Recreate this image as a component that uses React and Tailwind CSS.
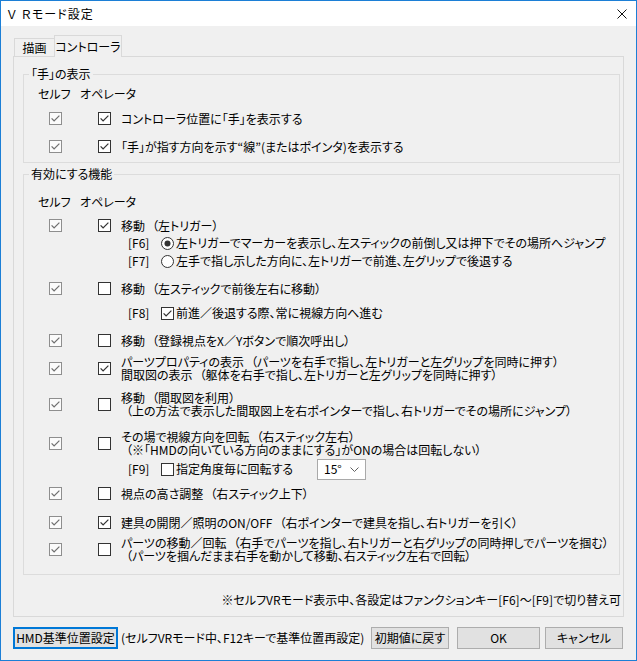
import React from "react";

const Check = ({ checked, dim }) => (
  <svg width="13" height="13" viewBox="0 0 13 13" className="block shrink-0">
    <rect x="0.5" y="0.5" width="12" height="12" fill={dim ? "#fbfbfb" : "#ffffff"} stroke={dim ? "#8e8e8e" : "#333333"} />
    {checked && (
      <path d="M2.6 6.4L5.1 8.9L10.4 3.6" fill="none" stroke={dim ? "#6f6f6f" : "#333333"} strokeWidth="1.25" />
    )}
  </svg>
);

const Radio = ({ checked }) => (
  <svg width="13" height="13" viewBox="0 0 13 13" className="block shrink-0">
    <circle cx="6.5" cy="6.5" r="6" fill="#ffffff" stroke="#333333" />
    {checked && <circle cx="6.5" cy="6.5" r="3" fill="#333333" />}
  </svg>
);

const G = () => <span className="inline-block w-[7px]" />;

const Item = ({ op, className = "", children }) => (
  <div className={`flex items-center pl-[25px] ${className}`}>
    <Check checked dim />
    <div className="ml-[36px]">
      <Check checked={op} />
    </div>
    <div className="ml-[10px] leading-[13px] whitespace-nowrap">{children}</div>
  </div>
);

const Sub = ({ label, control, className = "", children }) => (
  <div className={`flex items-center pl-[104px] whitespace-nowrap ${className}`}>
    <span className="w-[33px] shrink-0">{label}</span>
    {control}
    <span className="ml-[2px]">{children}</span>
  </div>
);

const Header = ({ className = "" }) => (
  <div className={`flex items-center ${className}`}>
    <span className="pl-[14px] w-[56px] shrink-0">セルフ</span>
    <span>オペレータ</span>
  </div>
);

export default function App() {
  return (
    <div className="w-[637px] h-[661px] border border-[#1c7fd6] bg-[#f0f0f0] flex flex-col overflow-hidden text-[12px] text-black font-['Noto_Sans_CJK_JP','Noto_Sans_CJK_SC',sans-serif] [font-feature-settings:'palt']">
      {/* title bar */}
      <div className="h-[25px] shrink-0 bg-white flex items-center pl-[6px] pr-[9px]">
        <span className="tracking-[1px]">Ｖ Ｒモード設定</span>
        <svg width="10" height="10" viewBox="0 0 10 10" className="ml-auto block">
          <path d="M0.5 0.5L9.5 9.5M9.5 0.5L0.5 9.5" stroke="#111" strokeWidth="1" />
        </svg>
      </div>

      <div className="px-[12px] pt-[9px]">
        {/* tabs */}
        <div className="flex items-end h-[21px] pl-[1px]">
          <div className="h-[18px] w-[40px] border border-b-0 border-r-0 border-[#d9d9d9] bg-[#f0f0f0] flex items-center justify-center pt-[1px]">
            描画
          </div>
          <div className="relative z-10 h-[22px] -mb-[1px] w-[68px] border border-b-0 border-[#d9d9d9] bg-[#f0f0f0] flex items-start justify-center pt-[2px]">
            コントローラ
          </div>
        </div>

        {/* panel */}
        <div className="border border-[#d9d9d9] pb-[8px]">
          <fieldset className="mt-[9px] ml-[9px] mr-[3px] border border-[#dcdcdc]">
            <legend className="ml-[5px] px-[2px] leading-[16px]">「手」の表示</legend>
            <Header className="h-[24px]" />
            <Item op className="h-[24px]">コントローラ位置に「手」を表示する</Item>
            <Item op className="h-[32px]">「手」が指す方向を示す“線”(またはポインタ)を表示する</Item>
          </fieldset>

          <fieldset className="mt-[3px] ml-[9px] mr-[3px] border border-[#dcdcdc] pb-[12px]">
            <legend className="ml-[5px] px-[2px] leading-[16px]">有効にする機能</legend>
            <Header className="mt-[10px] h-[20px]" />
            <Item op className="mt-[4px] h-[18px]">
              移動<G />（左トリガー）
            </Item>
            <Sub label="[F6]" control={<Radio checked />} className="h-[18px]">
              左トリガーでマーカーを表示し、左スティックの前倒し又は押下でその場所へジャンプ
            </Sub>
            <Sub label="[F7]" control={<Radio />} className="h-[18px]">
              左手で指し示した方向に、左トリガーで前進、左グリップで後退する
            </Sub>
            <Item className="mt-[9px] h-[18px]">
              移動<G />（左スティックで前後左右に移動）
            </Item>
            <Sub label="[F8]" control={<Check checked />} className="mt-[7px] h-[18px]">
              前進／後退する際、常に視線方向へ進む
            </Sub>
            <Item className="mt-[9px] h-[18px]">
              移動<G />（登録視点をX／Yボタンで順次呼出し）
            </Item>
            <Item op className="mt-[6px] h-[26px]">
              <div>
                パーツプロパティの表示<G />（パーツを右手で指し、左トリガーと左グリップを同時に押す）
              </div>
              <div>
                間取図の表示<G />（躯体を右手で指し、左トリガーと左グリップを同時に押す）
              </div>
            </Item>
            <Item className="mt-[10px] h-[26px]">
              <div>
                移動<G />（間取図を利用）
              </div>
              <div className="pl-[5px]">（上の方法で表示した間取図上を右ポインターで指し、右トリガーでその場所にジャンプ）</div>
            </Item>
            <Item className="mt-[13px] h-[26px]">
              <div>
                その場で視線方向を回転<G />（右スティック左右）
              </div>
              <div className="pl-[5px]">（※「HMDの向いている方向のままにする」がONの場合は回転しない）</div>
            </Item>
            <div className="mt-[3px] h-[20px] flex items-center pl-[104px] whitespace-nowrap">
              <span className="w-[33px] shrink-0">[F9]</span>
              <Check />
              <span className="ml-[2px] w-[141px] shrink-0">指定角度毎に回転する</span>
              <div className="w-[49px] h-[21px] bg-white border border-[#a9a9a9] flex items-center pl-[6px]">
                <span>15°</span>
                <svg width="9" height="5" viewBox="0 0 9 5" className="ml-auto mr-[6px] block">
                  <path d="M0.5 0.5L4.5 4.5L8.5 0.5" fill="none" stroke="#606060" strokeWidth="1" />
                </svg>
              </div>
            </div>
            <Item className="mt-[5px] h-[18px]">
              視点の高さ調整<G />（右スティック上下）
            </Item>
            <Item op className="mt-[11px] h-[18px]">
              建具の開閉／照明のON/OFF<G />（右ポインターで建具を指し、右トリガーを引く）
            </Item>
            <Item className="mt-[5px] h-[26px]">
              <div>
                パーツの移動／回転<G />（右手でパーツを指し、右トリガーと右グリップの同時押しでパーツを掴む）
              </div>
              <div className="pl-[5px]">（パーツを掴んだまま右手を動かして移動、右スティック左右で回転）</div>
            </Item>
          </fieldset>

          <div className="mt-[17px] h-[16px] flex items-center justify-end pr-[2px] whitespace-nowrap">
            ※セルフVRモード表示中、各設定はファンクションキー[F6]～[F9]で切り替え可
          </div>
        </div>
      </div>

      {/* bottom buttons */}
      <div className="mt-[10px] h-[22px] flex items-center pl-[12px] pr-[13px] whitespace-nowrap">
        <button className="w-[105px] h-[22px] border-2 border-[#0078d7] bg-[#e1e1e1] flex items-center justify-center">
          HMD基準位置設定
        </button>
        <span className="ml-[3px]">(セルフVRモード中、F12キーで基準位置再設定)</span>
        <button className="ml-auto w-[78px] h-[22px] border border-[#adadad] bg-[#e1e1e1] flex items-center justify-center">
          初期値に戻す
        </button>
        <button className="ml-[8px] w-[83px] h-[22px] border border-[#adadad] bg-[#e1e1e1] flex items-center justify-center">
          OK
        </button>
        <button className="ml-[5px] w-[78px] h-[22px] border border-[#adadad] bg-[#e1e1e1] flex items-center justify-center">
          キャンセル
        </button>
      </div>
    </div>
  );
}
